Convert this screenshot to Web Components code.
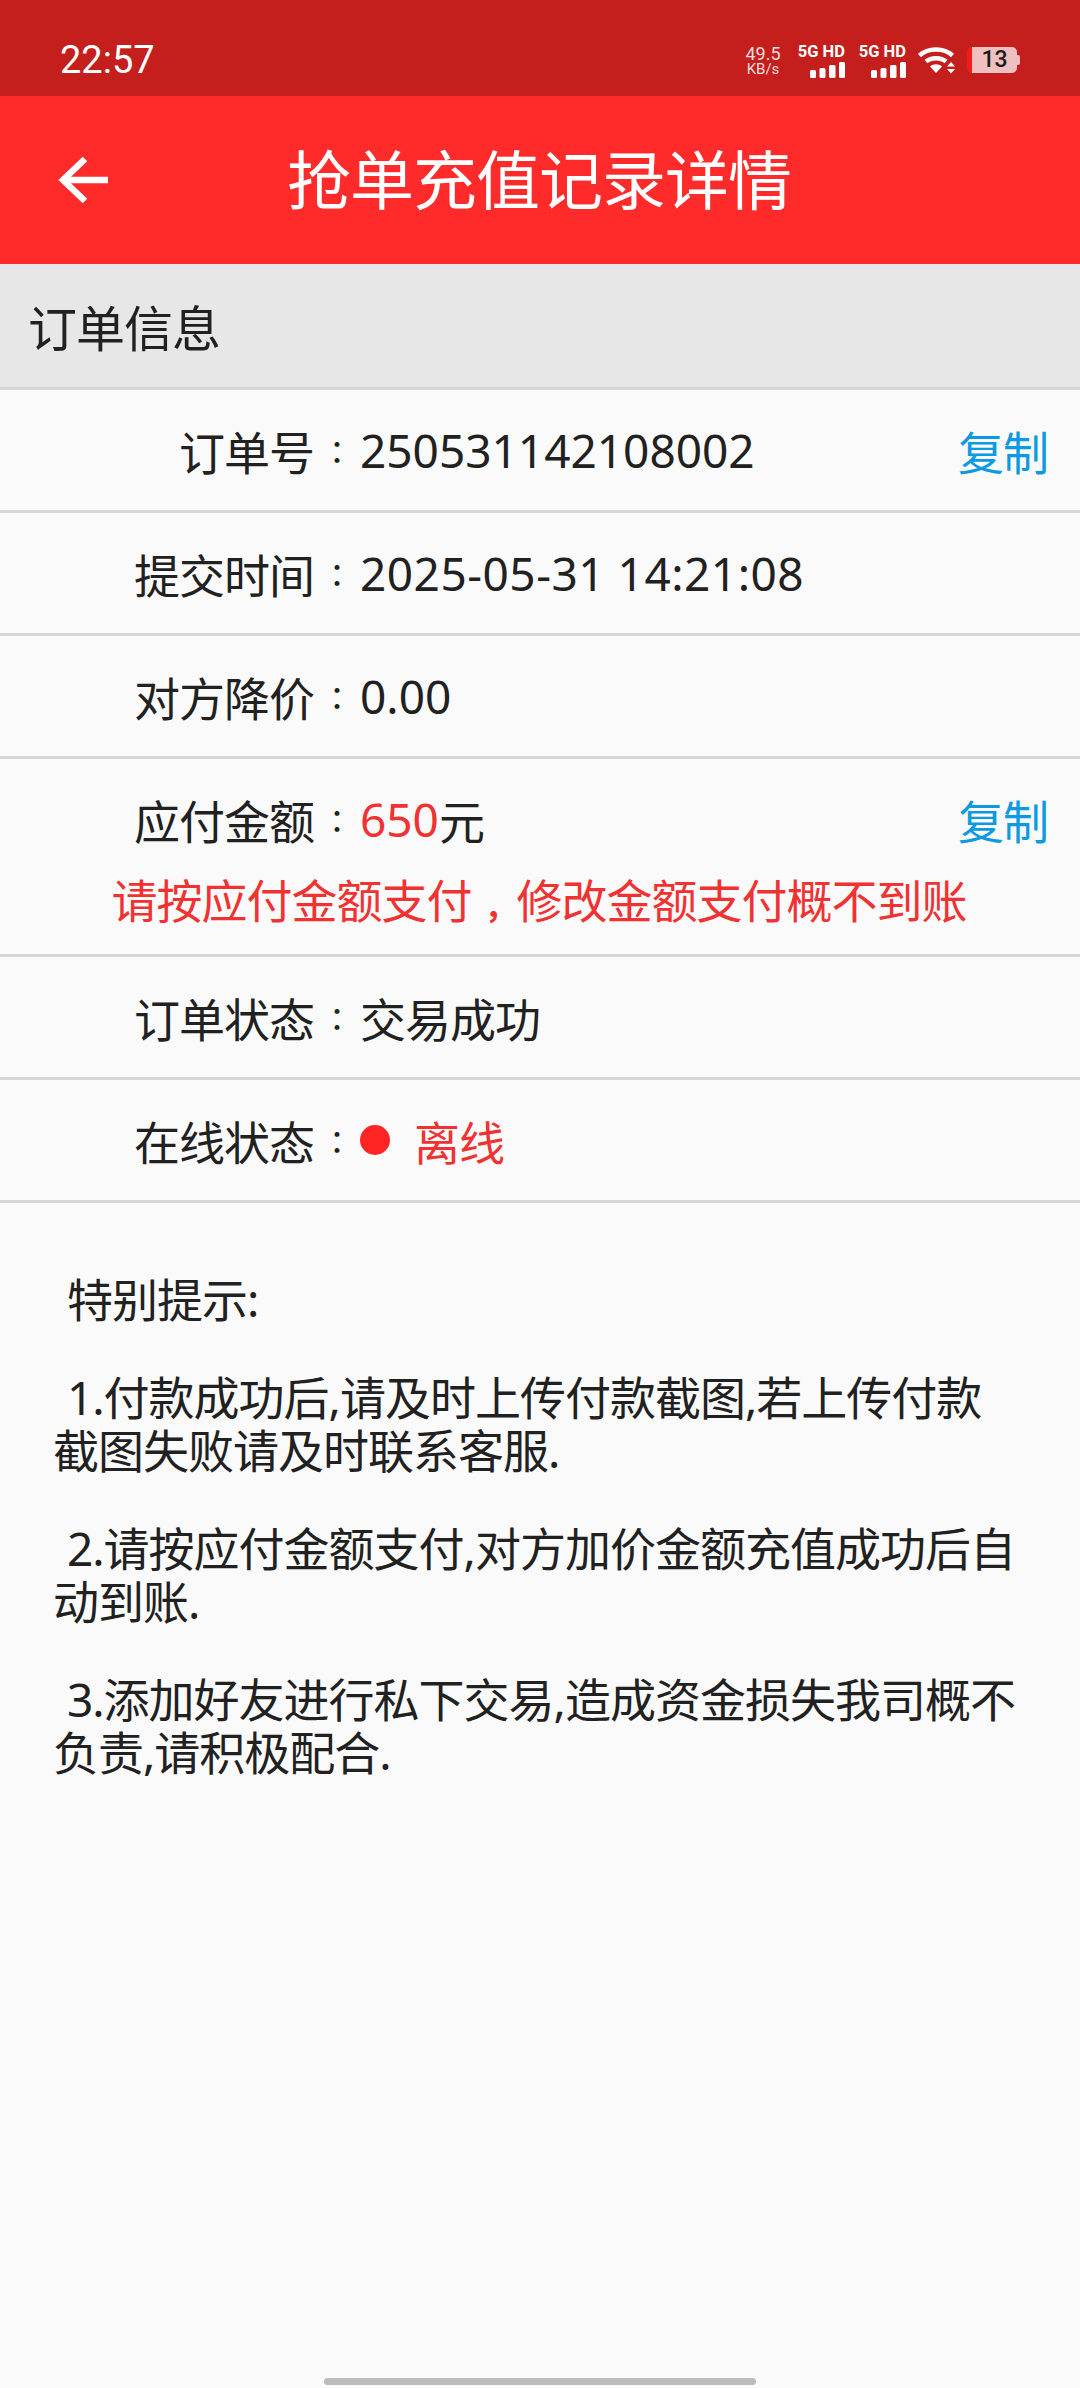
<!DOCTYPE html>
<html lang="zh-CN">
<head>
<meta charset="utf-8">
<title>抢单充值记录详情</title>
<style>
    html, body { margin: 0; padding: 0; background: #fafafa; }
    body { width: 1080px; height: 2388px; overflow: hidden; display: flex; flex-direction: column;
        font-family: "Noto Sans", "Noto Sans CJK SC", sans-serif; color: #212121; }
</style>
</head>
<body>
<status-bar></status-bar>
<app-bar title="抢单充值记录详情"></app-bar>
<section-head>订单信息</section-head>
<info-row label="订单号" copy numeric>250531142108002</info-row>
<info-row label="提交时间" numeric style="--value-spacing: .5px">2025-05-31 14:21:08</info-row>
<info-row label="对方降价" numeric>0.00</info-row>
<info-row label="应付金额" copy note="请按应付金额支付，修改金额支付概不到账"><red-text style="letter-spacing: 0">650</red-text>元</info-row>
<info-row label="订单状态">交易成功</info-row>
<info-row label="在线状态"><status-dot></status-dot><red-text>离线</red-text></info-row>
<tip-list>
    <p>&nbsp;特别提示:</p>
    <p>&nbsp;1.付款成功后,请及时上传付款截图,若上传付款截图失败请及时联系客服.</p>
    <p>&nbsp;2.请按应付金额支付,对方加价金额充值成功后自动到账.</p>
    <p>&nbsp;3.添加好友进行私下交易,造成资金损失我司概不负责,请积极配合.</p>
</tip-list>
<home-bar></home-bar>
<script>
class StatusBar extends HTMLElement {
    constructor() {
        super();
        this.attachShadow({mode: 'open'});
    }

    connectedCallback() {
        const signal = `
            <svg width="35" height="16" viewBox="0 0 35 16" fill="#fff">
                <rect x="0" y="8" width="6" height="8" rx="1.5"/>
                <rect x="9.5" y="6" width="6" height="10" rx="1.5"/>
                <rect x="19" y="3" width="6.5" height="13" rx="1.5"/>
                <rect x="29" y="0" width="6" height="16" rx="1.5"/>
            </svg>`;
        const net = `<div class="net"><b>5G HD</b>${signal}</div>`;
        this.shadowRoot.innerHTML = `
            <style>
                :host { display: flex; align-items: center; height: 96px; flex: none; background: #c41f1d;
                    color: #fff; padding: 24px 60px 0 60px; box-sizing: border-box; }
                .time { font: 400 38px/1 Roboto, sans-serif; flex: 1; }
                .speed { display: flex; flex-direction: column; align-items: center; width: 40px;
                    font: 400 18px/18px Roboto, sans-serif; color: #f6dcdc; margin-right: 13px; }
                .speed small { font-size: 15px; line-height: 13px; }
                .net { display: flex; flex-direction: column; align-items: flex-end; width: 49px; margin-right: 12px; }
                .net b { font: 700 16.5px/17px Roboto, sans-serif; white-space: nowrap; margin-bottom: 2px; }
                .wifi { margin-right: 12px; flex: none; }
                .batt { position: relative; width: 50px; height: 26px; border-radius: 5px; background: #eec0bf;
                    color: #1a1a1a; font: 500 23px/26px Roboto, sans-serif; text-align: center; margin-right: 3px;
                    box-sizing: border-box; border-left: 5px solid #f01c1c; }
                .batt::after { content: ""; position: absolute; right: -3px; top: 8px; width: 3px; height: 10px;
                    background: #eec0bf; border-radius: 0 2px 2px 0; }
            </style>
            <span class="time">22:57</span>
            <div class="speed"><span>49.5</span><small>KB/s</small></div>
            ${net}${net}
            <svg class="wifi" width="37" height="28" viewBox="0 0 37 28" fill="none" stroke="#fff" stroke-width="4.5">
                <path d="M1.500 9.500C10 1.500 26 1.500 34.500 9.500"/>
                <path d="M8 15.500C13 11 23 11 28 15.500"/>
                <path d="M12 20.500 18 27 24 20.500C20.500 17.500 15.500 17.500 12 20.500Z" fill="#fff" stroke="none"/>
                <path d="M33 16 37 20.500H29ZM33 27.500 29 23H37Z" fill="#fff" stroke="none"/>
            </svg>
            <div class="batt">13</div>
        `;
    }
}

class AppBar extends HTMLElement {
    constructor() {
        super();
        this.attachShadow({mode: 'open'});
    }

    connectedCallback() {
        this.shadowRoot.innerHTML = `
            <style>
                :host { display: flex; align-items: center; justify-content: center; position: relative; flex: none;
                    height: 168px; background: #ff2a2a; color: #fff; padding-right: 2px; box-sizing: border-box; }
                h1 { margin: 0; font: 400 64px/1 "Noto Sans", "Noto Sans CJK SC", sans-serif; letter-spacing: -1px; }
                svg { position: absolute; left: 58px; top: 59px; }
            </style>
            <svg width="50" height="50" viewBox="0 0 50 50" fill="none" stroke="#fff" stroke-width="6.500">
                <path d="M27 4 5 25l22 21M5 25h49"/>
            </svg>
            <h1>${this.getAttribute('title') || ''}</h1>
        `;
    }
}

class SectionHead extends HTMLElement {
    constructor() {
        super();
        this.attachShadow({mode: 'open'});
        this.shadowRoot.innerHTML = `
            <style>
                :host { display: flex; align-items: center; flex: none; height: 126px; box-sizing: border-box;
                    padding-left: 28px; background: #e7e7e7; border-bottom: 3px solid #d6d6d6;
                    font-size: 49px; letter-spacing: -1px; }
            </style>
            <slot></slot>
        `;
    }
}

class InfoRow extends HTMLElement {
    constructor() {
        super();
        this.attachShadow({mode: 'open'});
    }

    connectedCallback() {
        const label = this.getAttribute('label') || '';
        const note = this.getAttribute('note');
        const copy = this.hasAttribute('copy');
        this.shadowRoot.innerHTML = `
            <style>
                :host { display: block; flex: none; border-bottom: 3px solid #d6d6d6; font-size: 46px; letter-spacing: -1px; }
                :host([numeric]) .value { letter-spacing: var(--value-spacing, 0); }
                .line { display: flex; align-items: center; height: 120px; }
                .label { width: 314px; text-align: right; flex: none; }
                .colon { width: 46px; flex: none; text-align: center; font-size: 32px; letter-spacing: 0;
                    font-family: "Noto Sans CJK TC", sans-serif; padding-right: 0; }
                .value { flex: 1; display: flex; align-items: center; white-space: pre; }
                .copy { color: #0d9ae0; margin-right: 32px; }
                .note { color: #f03232; text-align: center; height: 89px; margin-top: -14px; padding-right: 2px; }
                .note span { display: inline-block; width: 45px; padding-left: 13px; box-sizing: border-box;
                    font-size: 32px; font-weight: 700; letter-spacing: 0; }
            </style>
            <div class="line">
                <span class="label">${label}</span><span class="colon" lang="zh-Hant">：</span>
                <div class="value"><slot></slot></div>
                ${copy ? '<span class="copy">复制</span>' : ''}
            </div>
            ${note ? `<div class="note">${note.replace('，', '<span>，</span>')}</div>` : ''}
        `;
    }
}

class RedText extends HTMLElement {
    constructor() {
        super();
        this.attachShadow({mode: 'open'});
        this.shadowRoot.innerHTML = '<style>:host { color: #f03232; }</style><slot></slot>';
    }
}

class StatusDot extends HTMLElement {
    constructor() {
        super();
        this.attachShadow({mode: 'open'});
        this.shadowRoot.innerHTML = `
            <style>
                :host { display: inline-block; width: 30px; height: 30px; border-radius: 50%;
                    background: #ff2525; margin-right: 24px; }
            </style>
        `;
    }
}

class TipList extends HTMLElement {
    constructor() {
        super();
        this.attachShadow({mode: 'open'});
        this.shadowRoot.innerHTML = `
            <style>
                :host { display: flex; flex-direction: column; gap: 45px; padding: 70px 60px 0 53px; flex: none;
                    font-size: 46px; line-height: 53px; letter-spacing: -1px; }
                ::slotted(p) { margin: 0; text-indent: 3px; }
            </style>
            <slot></slot>
        `;
    }
}

class HomeBar extends HTMLElement {
    constructor() {
        super();
        this.attachShadow({mode: 'open'});
        this.shadowRoot.innerHTML = `
            <style>
                :host { display: flex; justify-content: center; align-items: flex-end; flex: 1; padding-bottom: 3px; }
                div { width: 432px; height: 7px; border-radius: 4px; background: #bcbcbc; }
            </style>
            <div></div>
        `;
    }
}

customElements.define('status-bar', StatusBar);
customElements.define('app-bar', AppBar);
customElements.define('section-head', SectionHead);
customElements.define('info-row', InfoRow);
customElements.define('red-text', RedText);
customElements.define('status-dot', StatusDot);
customElements.define('tip-list', TipList);
customElements.define('home-bar', HomeBar);
</script>
</body>
</html>
